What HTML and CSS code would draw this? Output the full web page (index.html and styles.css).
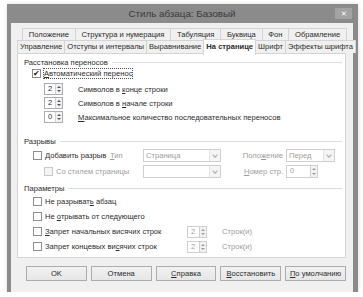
FILE: index.html
```html
<!DOCTYPE html>
<html lang="ru">
<head>
  <meta charset="UTF-8">
  <title>Стиль абзаца: Базовый</title>
  <link rel="stylesheet" href="styles.css">
</head>
<body>
  <div class="window">
    <div class="titlebar">
      <span class="title">Стиль абзаца: Базовый</span>
      <span class="close">✕</span>
    </div>

    <div class="client">
      <div class="tabs row1">
        <span class="tab">Положение</span>
        <span class="tab">Структура и нумерация</span>
        <span class="tab">Табуляция</span>
        <span class="tab">Буквица</span>
        <span class="tab">Фон</span>
        <span class="tab">Обрамление</span>
      </div>
      <div class="tabs row2">
        <span class="tab">Управление</span>
        <span class="tab">Отступы и интервалы</span>
        <span class="tab">Выравнивание</span>
        <span class="tab active">На странице</span>
        <span class="tab">Шрифт</span>
        <span class="tab">Эффекты шрифта</span>
      </div>

      <div class="panel">
        <!-- расстановка переносов -->
        <div class="group-head"><span>Расстановка переносов</span></div>
        <div class="check-row auto">
          <span class="box">✔</span>
          <span class="focus"><u>А</u>втоматический перенос</span>
        </div>
        <div class="spins">
          <div class="spin-row">
            <span class="spin"><span class="val">2</span><span class="arrows"></span></span>
            <span>Символов в <u>к</u>онце строки</span>
          </div>
          <div class="spin-row">
            <span class="spin"><span class="val">2</span><span class="arrows"></span></span>
            <span>Символов в <u>н</u>ачале строки</span>
          </div>
          <div class="spin-row">
            <span class="spin"><span class="val">0</span><span class="arrows"></span></span>
            <span><u>М</u>аксимальное количество последовательных переносов</span>
          </div>
        </div>

        <!-- разрывы -->
        <div class="group-head gap"><span>Разрывы</span></div>
        <div class="breaks">
          <div class="check-row"><span class="box"></span><span><u>Д</u>обавить разрыв</span></div>
          <span class="dim"><u>Т</u>ип</span>
          <span class="select"><span class="val">Страница</span><span class="drop"></span></span>
          <span class="dim right">Поло<u>ж</u>ение</span>
          <span class="select"><span class="val">Перед</span><span class="drop"></span></span>

          <div class="check-row dim sub"><span class="box off"></span><span>Со стилем страницы</span></div>
          <span></span>
          <span class="select"><span class="val"></span><span class="drop"></span></span>
          <span class="dim right"><u>Н</u>омер стр.</span>
          <span class="spin dim-spin"><span class="val">0</span><span class="arrows"></span></span>
        </div>

        <!-- параметры -->
        <div class="group-head params-head"><span>Параметры</span></div>
        <div class="params">
          <div class="check-row"><span class="box"></span><span>Не разрыват<u>ь</u> абзац</span></div>
          <span></span><span></span>
          <div class="check-row"><span class="box"></span><span>Не <u>о</u>трывать от следующего</span></div>
          <span></span><span></span>
          <div class="check-row"><span class="box"></span><span><u>З</u>апрет начальных висячих строк</span></div>
          <span class="spin dim-spin"><span class="val">2</span><span class="arrows"></span></span>
          <span class="dim">Строк(и)</span>
          <div class="check-row"><span class="box"></span><span>Запрет концевых ви<u>с</u>ячих строк</span></div>
          <span class="spin dim-spin"><span class="val">2</span><span class="arrows"></span></span>
          <span class="dim">Строк(и)</span>
        </div>
      </div>

      <div class="buttons">
        <button class="btn">OK</button>
        <button class="btn">Отмена</button>
        <button class="btn"><u>С</u>правка</button>
        <button class="btn"><u>В</u>осстановить</button>
        <button class="btn"><u>П</u>о умолчанию</button>
      </div>
    </div>
  </div>
</body>
</html>
```

FILE: styles.css
```css
body {
  margin: 0;
  background: #ffffff;
  font-family: "Liberation Sans", Arial, sans-serif;
  font-size: 7.6px;
  color: #2b2b2b;
}
u {
  text-decoration: underline;
  text-underline-offset: 1px;
}
.window {
  margin: 4px 0 0 7px;
  width: 351px;
  height: 288px;
  box-sizing: border-box;
  background: #8b8b8b;
  padding: 0 5px 4px 4px;
  box-shadow: 0 0 4px rgba(0, 0, 0, 0.15);
}
.titlebar {
  display: flex;
  height: 19px;
}
.title {
  flex: 1;
  text-align: center;
  font-size: 9.8px;
  line-height: 20px;
  color: #3a3a3a;
  padding-left: 18px;
}
.close {
  width: 17px;
  height: 11px;
  margin-top: 4px;
  margin-right: 1px;
  background: #a3a3a3;
  color: #fff;
  font-size: 7px;
  line-height: 11px;
  text-align: center;
}
.client {
  background: #f0f0f0;
  height: 265px;
  padding: 5px 7px 0 6px;
}
.tabs {
  display: flex;
  height: 12px;
}
.row1 {
  margin: 0 -1px 0 5px;
}
.row2 {
  height: 13px;
}
.tab {
  flex: 1 1 auto;
  text-align: center;
  line-height: 12px;
  padding: 0 2px;
  background: #f0f0f0;
  border: 1px solid #d4d4d4;
  border-bottom: none;
  margin-right: -1px;
  white-space: nowrap;
}
.tab:last-child {
  margin-right: 0;
}
.tab.active {
  background: #fff;
  font-weight: bold;
  position: relative;
  z-index: 1;
  margin-top: -1px;
  height: 15px;
  line-height: 14px;
}
.panel {
  background: #fff;
  border: 1px solid #d4d4d4;
  height: 205px;
  box-sizing: border-box;
  padding-top: 2px;
}
.group-head {
  display: flex;
  align-items: center;
  height: 12px;
  padding-left: 6px;
  margin-right: 3px;
}
.group-head::after {
  content: "";
  flex: 1;
  border-top: 1px solid #dcdcdc;
  margin-left: 4px;
}
.group-head.gap {
  margin-top: 11px;
}
.params-head {
  margin-top: 3px;
}
.check-row {
  display: flex;
  align-items: center;
  gap: 3px;
  white-space: nowrap;
}
.auto {
  height: 11px;
  padding-left: 14px;
}
.box {
  width: 7px;
  height: 7px;
  border: 1px solid #8e8e8e;
  background: #fff;
  font-size: 8px;
  line-height: 7px;
  text-align: center;
  color: #222;
  flex: none;
}
.box.off {
  border-color: #c8c8c8;
  background: #f4f4f4;
}
.focus {
  outline: 1px dotted #555;
  line-height: 9px;
}
.spins {
  margin-top: 3px;
}
.spin-row {
  display: flex;
  align-items: center;
  height: 14px;
  padding-left: 26px;
  white-space: nowrap;
}
.spin-row .spin {
  margin-right: 15px;
}
.spin {
  display: flex;
  width: 19px;
  height: 12px;
  box-sizing: border-box;
  border: 1px solid #abadb3;
  background: #fff;
  flex: none;
}
.spin .val {
  flex: 1;
  line-height: 10px;
  padding-left: 3px;
}
.arrows {
  width: 6px;
  border-left: 1px solid #d0d0d0;
  background: #f2f2f2;
  position: relative;
}
.arrows::before,
.arrows::after {
  content: "";
  position: absolute;
  left: 1px;
  border-left: 2px solid transparent;
  border-right: 2px solid transparent;
}
.arrows::before {
  top: 2px;
  border-bottom: 2px solid #555;
}
.arrows::after {
  bottom: 2px;
  border-top: 2px solid #555;
}
.dim-spin {
  border-color: #d0d0d0;
  color: #a0a0a0;
}
.dim-spin .arrows::before {
  border-bottom-color: #9a9a9a;
}
.dim-spin .arrows::after {
  border-top-color: #9a9a9a;
}
.breaks {
  display: grid;
  grid-template-columns: 77px 33px 78px 65px 49px;
  grid-auto-rows: 16px;
  align-items: center;
  padding-left: 15px;
}
.sub {
  padding-left: 11px;
}
.dim {
  color: #9c9c9c;
}
.right {
  text-align: right;
  padding-right: 3px;
}
.select {
  display: flex;
  height: 13px;
  box-sizing: border-box;
  border: 1px solid #cfcfcf;
  background: #fff;
  color: #9c9c9c;
}
.select .val {
  flex: 1;
  line-height: 11px;
  padding-left: 2px;
}
.drop {
  width: 10px;
  border-left: 1px solid #e2e2e2;
  background: #f5f5f5;
  position: relative;
}
.drop::after {
  content: "";
  position: absolute;
  left: 3px;
  top: 3px;
  width: 3px;
  height: 3px;
  border-right: 1px solid #aaa;
  border-bottom: 1px solid #aaa;
  transform: rotate(45deg);
}
.breaks .spin {
  width: 32px;
  height: 13px;
}
.params {
  display: grid;
  grid-template-columns: 139px 20px auto;
  grid-auto-rows: 15px;
  align-items: center;
  column-gap: 15px;
  padding-left: 15px;
}
.params .spin {
  width: 20px;
}
.buttons {
  display: flex;
  gap: 4px;
  margin: 8px 0 0 9px;
}
.btn {
  flex: 1;
  height: 15px;
  padding: 0;
  font-family: inherit;
  font-size: 7.6px;
  color: #2b2b2b;
  background: linear-gradient(#f2f2f2, #e6e6e6);
  border: 1px solid #acacac;
}
```
